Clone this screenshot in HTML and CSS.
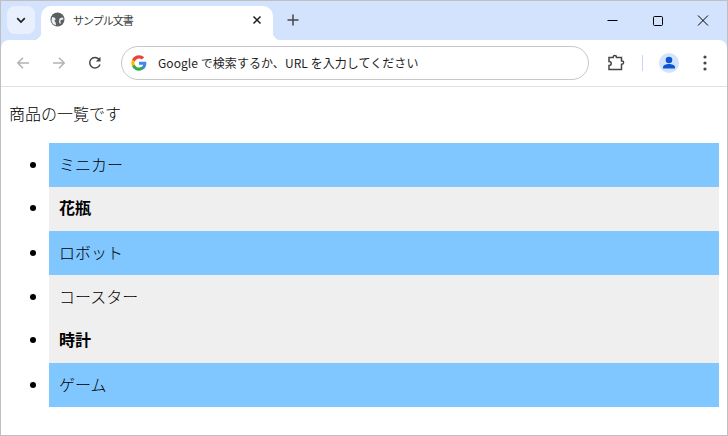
FILE: index.html
```html
<!DOCTYPE html>
<html lang="ja">
<head>
<meta charset="utf-8">
<title>サンプル文書</title>
<link rel="stylesheet" href="styles.css">
</head>
<body>
<div class="window">
  <header class="tabstrip">
    <button class="tabsearch" aria-label="タブを検索">
      <svg width="12" height="12" viewBox="0 0 12 12"><path d="M2.200 4.200 6 8l3.800-3.800" fill="none" stroke="#1f1f1f" stroke-width="1.700"/></svg>
    </button>
    <div class="tab">
      <svg class="favicon" width="16" height="16" viewBox="0 0 16 16"><circle cx="7.500" cy="7.500" r="7" fill="#5b5e62"/><path d="M2 5l3 .8.600 2-1.200.8 1.400 2.400v2.500L3 12 1.500 9ZM9.500 6.500l3-1.200 1.200 2-2.700.8-.8 1.200.8 1.700-1.200 1-.8-2.500Z" fill="#fff" opacity=".9"/></svg>
      <span class="tab-title">サンプル文書</span>
      <svg class="tab-close" width="10" height="10" viewBox="0 0 10 10"><path d="M1.500 1.500l7 7M8.500 1.500l-7 7" stroke="#1f1f1f" stroke-width="1.500"/></svg>
    </div>
    <svg class="newtab" width="12" height="12" viewBox="0 0 12 12"><path d="M6 .5v11M.5 6h11" stroke="#444746" stroke-width="1.500"/></svg>
    <div class="winctrls">
      <svg width="45" height="12" viewBox="0 0 45 12"><path d="M16.500 5.500h10" stroke="#000" stroke-width="1"/></svg>
      <svg width="45" height="12" viewBox="0 0 45 12"><rect x="17.500" y="1.500" width="9" height="9" rx="1" fill="none" stroke="#000" stroke-width="1"/></svg>
      <svg width="45" height="12" viewBox="0 0 45 12"><path d="M17 .5l10 10M27 .5l-10 10" stroke="#000" stroke-width="1"/></svg>
    </div>
  </header>
  <nav class="toolbar">
    <svg class="navicon" width="16" height="16" viewBox="0 0 16 16"><path d="M14 8H3M8 2.800 2.800 8 8 13.200" fill="none" stroke="#b1b3b4" stroke-width="1.500"/></svg>
    <svg class="navicon" width="16" height="16" viewBox="0 0 16 16"><path d="M2 8h11M8 2.800 13.200 8 8 13.200" fill="none" stroke="#b1b3b4" stroke-width="1.500"/></svg>
    <svg class="navicon" width="16" height="16" viewBox="0 0 16 16"><path d="M13 9.500A5.300 5.300 0 1 1 12 4.200" fill="none" stroke="#444746" stroke-width="1.500"/><path d="M13.500 1.800v4.700H8.800Z" fill="#444746"/></svg>
    <div class="omnibox">
      <svg width="16" height="16" viewBox="0 0 48 48"><path fill="#4285f4" d="M46 24.500c0-1.600-.1-3.100-.4-4.500H24v8.900h12.400c-.5 2.900-2.100 5.300-4.600 7v5.800h7.400C43.500 37.700 46 31.700 46 24.500z"/><path fill="#34a853" d="M24 47c6.200 0 11.400-2.100 15.200-5.600l-7.400-5.800c-2 1.400-4.700 2.200-7.800 2.200-6 0-11-4-12.800-9.500H3.500v6C7.300 41.800 15 47 24 47z"/><path fill="#fbbc05" d="M11.200 28.300c-.5-1.400-.7-2.800-.7-4.300s.3-3 .7-4.300v-6H3.500C2 16.800 1 20.300 1 24s.9 7.200 2.500 10.300z"/><path fill="#ea4335" d="M24 10.200c3.400 0 6.400 1.200 8.800 3.500l6.600-6.600C35.400 3.400 30.200 1 24 1 15 1 7.300 6.200 3.500 13.700l7.700 6C13 14.200 18 10.200 24 10.200z"/></svg>
      <span class="omni-text">Google で検索するか、URL を入力してください</span>
    </div>
    <svg class="ext" width="18" height="18" viewBox="0 0 18 18"><path d="M2 3.500h4.200V3a1.600 1.600 0 0 1 3.200 0v.5h5.100V7h.5a1.600 1.600 0 0 1 0 3.200h-.5v5.300H2v-4c1.500 0 2.200-.9 2.200-2S3.500 7.500 2 7.500Z" fill="none" stroke="#444746" stroke-width="1.500"/></svg>
    <span class="divider"></span>
    <span class="avatar">
      <svg width="20" height="20" viewBox="0 0 20 20"><circle cx="10" cy="7" r="3.300" fill="#0b57d0"/><path d="M4 15.500v-1.300c0-2.200 3.300-3.200 6-3.200s6 1 6 3.200v1.300Z" fill="#0b57d0"/></svg>
    </span>
    <svg class="menu" width="4" height="16" viewBox="0 0 4 16"><circle cx="2" cy="2" r="1.600" fill="#444746"/><circle cx="2" cy="8" r="1.600" fill="#444746"/><circle cx="2" cy="14" r="1.600" fill="#444746"/></svg>
  </nav>
  <main class="page">
    <p class="intro">商品の一覧です</p>
    <ul class="items">
      <li class="item blue">ミニカー</li>
      <li class="item gray bold">花瓶</li>
      <li class="item blue">ロボット</li>
      <li class="item gray">コースター</li>
      <li class="item gray bold">時計</li>
      <li class="item blue">ゲーム</li>
    </ul>
  </main>
</div>
</body>
</html>
```
FILE: styles.css
```css
* { box-sizing: border-box; }
html, body { margin: 0; height: 100%; }
body { font-family: "Noto Sans CJK JP", "Noto Sans", sans-serif; font-weight: 300; color: #000; overflow: hidden; }
.window { width: 728px; height: 436px; border: 1px solid #bfbfbf; background: #d3e3fd; display: flex; flex-direction: column; }

.tabstrip { height: 39px; flex: none; background: #d3e3fd; display: flex; align-items: flex-start; padding: 5px 0 0 6px; }
.tabsearch { width: 28px; height: 28px; border: 0; border-radius: 8px; background: #e9f0fd; padding: 0; display: flex; align-items: center; justify-content: center; }
.tab { width: 232px; height: 34px; margin-left: 6px; background: #fff; border-radius: 10px 10px 0 0; display: flex; align-items: center; padding: 0 11px 6px 9px; position: relative; }
.tab::before, .tab::after { content: ""; position: absolute; bottom: 0; width: 8px; height: 8px; }
.tab::before { left: -8px; background: radial-gradient(circle at 0 0, transparent 8px, #fff 8.500px); }
.tab::after { right: -8px; background: radial-gradient(circle at 100% 0, transparent 8px, #fff 8.500px); }
.favicon { flex: none; }
.tab-title { margin-left: 7px; font-size: 11px; letter-spacing: -1px; font-weight: 400; line-height: 16px; color: #3c3f41; flex: 1; }
.tab-close { flex: none; }
.newtab { margin: 8px 0 0 14px; }
.winctrls { margin-left: auto; margin-top: 9px; margin-right: 1px; display: flex; }

.toolbar { height: 47px; flex: none; background: #fff; border-bottom: 1px solid #e2e2e2; display: flex; align-items: center; padding: 0 0 0 14px; border-radius: 8px 8px 0 0; }
.navicon { margin-right: 20px; flex: none; }
.navicon:nth-child(3) { margin-right: 18px; }
.omnibox { width: 468px; height: 34px; border: 1px solid #c7c7c7; border-radius: 17px; display: flex; align-items: center; padding-left: 9px; flex: none; }
.omni-text { margin-left: 11px; font-size: 12px; font-weight: 400; letter-spacing: .06px; line-height: 18px; color: #1f1f1f; white-space: nowrap; }
.ext { margin-left: 18px; flex: none; }
.divider { width: 1px; height: 16px; background: #c4d7f5; margin-left: 17px; flex: none; }
.avatar { width: 20px; height: 20px; border-radius: 50%; background: #d3e3fd; margin-left: 16px; flex: none; display: flex; }
.menu { margin-left: 24px; flex: none; }

.page { flex: 1; padding: 14px 8px 0; background: #fff; }
.intro { margin: 0 0 18px; font-size: 16px; line-height: 24px; }
.items { margin: 0; padding: 0 0 0 40px; list-style: disc; }
.item { font-size: 16px; line-height: 24px; padding: 9px 10px 11px; }
.blue { background: #80c6ff; }
.gray { background: #efefef; }
.bold { font-weight: 700; padding-top: 8px; padding-bottom: 12px; }
```
